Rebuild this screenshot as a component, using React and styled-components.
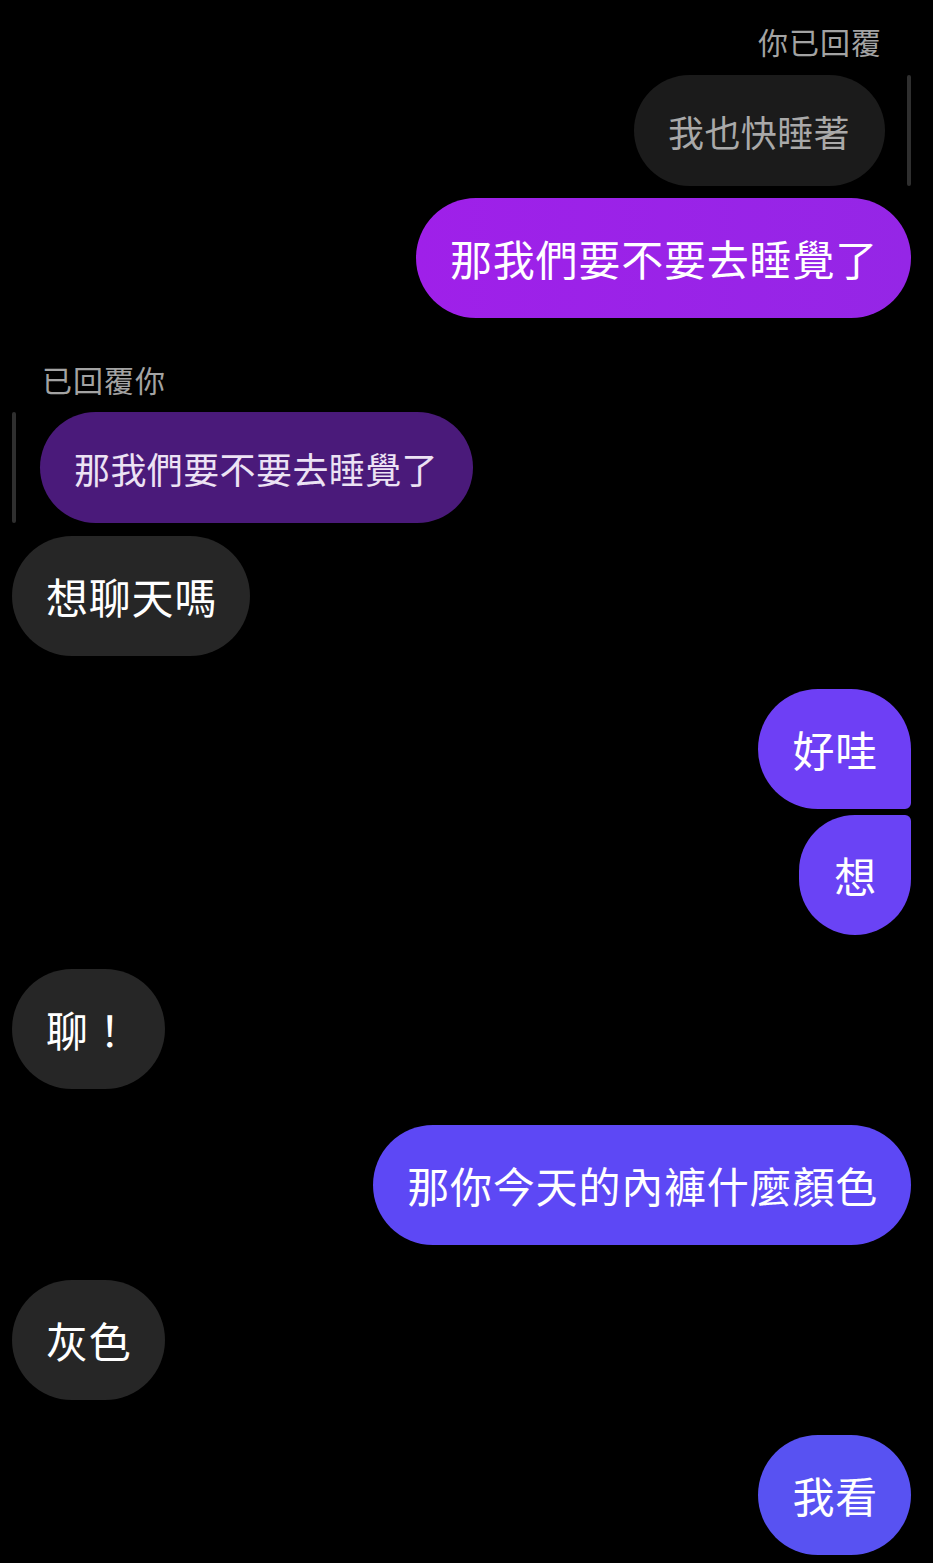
import styled, { createGlobalStyle } from 'styled-components';

const GlobalStyle = createGlobalStyle`
    html, body {
        margin: 0;
        padding: 0;
        background: #000;
    }
    body {
        font-family: "Noto Sans CJK TC", "Noto Sans CJK SC", "Noto Sans", sans-serif;
    }
`;

const Thread = styled.div`
    width: 933px;
    height: 1563px;
    box-sizing: border-box;
    padding: 23px 22px 0 12px;
    display: flex;
    flex-direction: column;
    background: #000;
    overflow: hidden;
`;

const Row = styled.div`
    display: flex;
    justify-content: ${props => props.mine ? 'flex-end' : 'flex-start'};
    align-items: stretch;
    margin-top: ${props => props.top || 0}px;
`;

const ReplyLabel = styled.div`
    font-size: 30px;
    line-height: 36px;
    color: #a3a3a3;
    text-align: ${props => props.mine ? 'right' : 'left'};
    padding: ${props => props.mine ? '0 29px 0 0' : '0 0 0 30px'};
    margin-top: ${props => props.top || 0}px;
    letter-spacing: 1px;
`;

const QuoteBar = styled.div`
    width: 4px;
    border-radius: 2px;
    background: #2f2f2f;
    flex-shrink: 0;
`;

const QuoteGroup = styled.div`
    display: flex;
    gap: ${props => props.mine ? 22 : 24}px;
    margin-top: ${props => props.top || 0}px;
    justify-content: ${props => props.mine ? 'flex-end' : 'flex-start'};
`;

const Quoted = styled.div`
    height: 111px;
    box-sizing: border-box;
    padding: 0 35px 0 34px;
    display: flex;
    align-items: center;
    border-radius: 56px;
    font-size: 36px;
    line-height: 1;
    letter-spacing: 0.4px;
    background: ${props => props.bg};
    color: ${props => props.fg};
    white-space: nowrap;
`;

const Bubble = styled.div`
    height: 120px;
    box-sizing: border-box;
    padding: 0 33px 0 34px;
    display: flex;
    align-items: center;
    font-size: 42px;
    line-height: 1;
    letter-spacing: 0.8px;
    color: #fff;
    background: ${props => props.bg};
    border-radius: ${props => props.radius || '60px'};
    white-space: nowrap;
`;

const GREY = '#262626';

export default function App() {
    return (
        <>
            <GlobalStyle />
            <Thread>
                <ReplyLabel mine>你已回覆</ReplyLabel>
                <QuoteGroup mine top={16}>
                    <Quoted bg="#1b1b1b" fg="#a9a9a9">我也快睡著</Quoted>
                    <QuoteBar />
                </QuoteGroup>
                <Row mine top={12}>
                    <Bubble bg="linear-gradient(90deg, #9f20e9 0%, #9526e6 100%)">那我們要不要去睡覺了</Bubble>
                </Row>

                <ReplyLabel top={43}>已回覆你</ReplyLabel>
                <QuoteGroup top={15}>
                    <QuoteBar />
                    <Quoted bg="#4a1a7a" fg="#ece2f4">那我們要不要去睡覺了</Quoted>
                </QuoteGroup>
                <Row top={13}>
                    <Bubble bg={GREY}>想聊天嗎</Bubble>
                </Row>

                <Row mine top={33}>
                    <Bubble bg="#6e3ff5" radius="60px 60px 6px 60px">好哇</Bubble>
                </Row>
                <Row mine top={6}>
                    <Bubble bg="#6a43f5" radius="56px 6px 56px 56px" style={{ paddingLeft: 35, paddingRight: 34 }}>想</Bubble>
                </Row>

                <Row top={34}>
                    <Bubble bg={GREY}>聊！</Bubble>
                </Row>
                <Row mine top={36}>
                    <Bubble bg="#5d48f5">那你今天的內褲什麼顏色</Bubble>
                </Row>
                <Row top={35}>
                    <Bubble bg={GREY}>灰色</Bubble>
                </Row>
                <Row mine top={35}>
                    <Bubble bg="#5852f2">我看</Bubble>
                </Row>
            </Thread>
        </>
    );
}
